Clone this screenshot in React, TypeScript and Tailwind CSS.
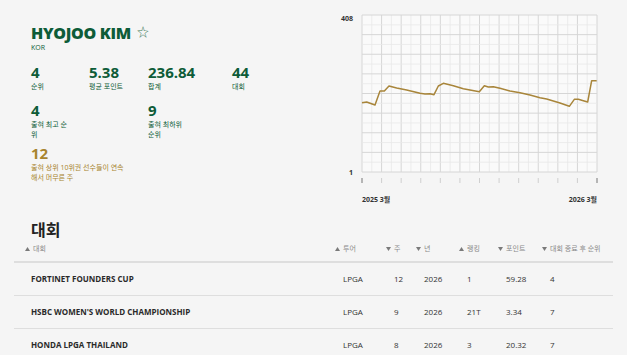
import React from "react";

const GREEN = "text-[#0d5c38]";

type Stat = { value: string; label: string; w: string; gold?: boolean };

const rowOne: Stat[] = [
  { value: "4", label: "순위", w: "w-[58px]" },
  { value: "5.38", label: "평균 포인트", w: "w-[59px]" },
  { value: "236.84", label: "합계", w: "w-[84px]" },
  { value: "44", label: "대회", w: "w-[60px]" },
];

function StatBlock({ s, labelW }: { s: Stat; labelW?: string }) {
  const color = s.gold ? "text-[#a8842e]" : GREEN;
  return (
    <div className={`${s.w} flex flex-col`}>
      <div className={`text-[15px] leading-[16px] font-bold ${color}`}>{s.value}</div>
      <div className={`mt-[2px] text-[7px] leading-[10px] ${color} ${labelW ?? ""}`}>{s.label}</div>
    </div>
  );
}

function Chart() {
  const x0 = 22;
  const x1 = 257;
  const y0 = 15;
  const y1 = 172;
  const dx = (x1 - x0) / 24;
  const dy = (y1 - y0) / 16;
  const vLines = Array.from({ length: 25 }, (_, i) => i);
  const hLines = Array.from({ length: 17 }, (_, i) => i);
  const pts: [number, number][] = [
    [126, 308], [140, 306], [165, 315], [180, 273], [193, 273], [207, 258], [230, 264],
    [260, 270], [300, 280], [315, 282], [330, 281], [342, 284], [355, 258], [370, 250],
    [400, 257], [430, 266], [450, 270], [478, 275], [493, 257], [505, 261], [520, 260],
    [540, 265], [570, 273], [600, 278], [630, 285], [660, 293], [680, 297], [700, 303],
    [720, 309], [748, 319], [763, 298], [775, 298], [790, 302], [803, 306], [815, 242],
    [830, 242],
  ];
  const path = pts.map(([x, y]) => `${(x / 3 - 20).toFixed(2)},${(y / 3).toFixed(2)}`).join(" ");
  return (
    <svg width="287" height="210" viewBox="0 0 287 210" className="block">
      <rect x={x0} y={y0} width={x1 - x0} height={y1 - y0} fill="#fafafa" />
      {vLines.map((i) => (
        <line
          key={`v${i}`}
          x1={x0 + i * dx}
          x2={x0 + i * dx}
          y1={y0}
          y2={y1}
          stroke={i % 2 === 0 ? "#d6d6d6" : "#e9e9e9"}
          strokeWidth={i % 2 === 0 ? 1 : 0.8}
        />
      ))}
      {hLines.map((i) => (
        <line
          key={`h${i}`}
          x1={x0}
          x2={x1}
          y1={y0 + i * dy}
          y2={y0 + i * dy}
          stroke={i % 2 === 0 ? "#d6d6d6" : "#e9e9e9"}
          strokeWidth={i % 2 === 0 ? 1 : 0.8}
        />
      ))}
      {Array.from({ length: 13 }, (_, i) => i).map((i) => (
        <line
          key={`t${i}`}
          x1={x0 + i * dx * 2}
          x2={x0 + i * dx * 2}
          y1={178}
          y2={183}
          stroke={i === 0 || i === 12 ? "#9a9a9a" : "#cfcfcf"}
          strokeWidth={i === 0 || i === 12 ? 1.4 : 1}
        />
      ))}
      <polyline points={path} fill="none" stroke="#a8853a" strokeWidth={1.5} strokeLinejoin="round" />
      <g fontFamily="'Open Sans','Noto Sans CJK KR',sans-serif" fontSize="7" fontWeight="700" fill="#333">
        <text x={13} y={21} textAnchor="end">408</text>
        <text x={13} y={175} textAnchor="end">1</text>
        <text x={x0} y={202}>2025 3월</text>
        <text x={x1} y={202} textAnchor="end">2026 3월</text>
      </g>
    </svg>
  );
}

function Arrow({ up }: { up: boolean }) {
  return (
    <svg width="5" height="4" viewBox="0 0 5 4" className="mr-[3px] shrink-0">
      <polygon points={up ? "0,4 5,4 2.5,0" : "0,0 5,0 2.5,4"} fill="#7a7a7a" />
    </svg>
  );
}

const cols = "grid grid-cols-[321px_51px_30px_43px_39px_44px_1fr]";

const header: { label: string; up: boolean; pad: string }[] = [
  { label: "대회", up: true, pad: "pl-[11px]" },
  { label: "투어", up: true, pad: "" },
  { label: "주", up: false, pad: "" },
  { label: "년", up: false, pad: "" },
  { label: "랭킹", up: true, pad: "" },
  { label: "포인트", up: false, pad: "" },
  { label: "대회 종료 후 순위", up: false, pad: "" },
];

const rows = [
  ["FORTINET FOUNDERS CUP", "LPGA", "12", "2026", "1", "59.28", "4"],
  ["HSBC WOMEN'S WORLD CHAMPIONSHIP", "LPGA", "9", "2026", "21T", "3.34", "7"],
  ["HONDA LPGA THAILAND", "LPGA", "8", "2026", "3", "20.32", "7"],
];

export default function App() {
  return (
    <div className="min-h-screen w-full bg-[#f5f5f5] font-['Open_Sans','Noto_Sans_CJK_KR',sans-serif] overflow-hidden">
      <div className="flex">
        <div className="w-[340px] pl-[31px] pt-[23px]">
          <div className="flex items-center">
            <h1 className={`text-[16px] leading-[20px] font-extrabold tracking-[-0.3px] ${GREEN}`}>HYOJOO KIM</h1>
            <span className="ml-[6px] text-[12px] leading-[20px] text-[#3d7a5a]">☆</span>
          </div>
          <div className={`text-[7px] leading-[9px] ${GREEN}`}>KOR</div>

          <div className="mt-[12px] flex">
            {rowOne.map((s) => (
              <StatBlock key={s.label} s={s} />
            ))}
          </div>
          <div className="mt-[10px] flex">
            <StatBlock s={{ value: "4", label: "출혀 최고 순위", w: "w-[117px]" }} labelW="w-[42px]" />
            <StatBlock s={{ value: "9", label: "출혀 최하위 순위", w: "w-[84px]" }} labelW="w-[40px]" />
          </div>
          <div className="mt-[5px] flex">
            <StatBlock
              s={{ value: "12", label: "출혀 상위 10위권 선수들이 연속해서 머무른 주", w: "w-[200px]", gold: true }}
              labelW="w-[95px]"
            />
          </div>
        </div>
        <div className="pt-0">
          <Chart />
        </div>
      </div>

      <h2 className="mt-[10px] pl-[31px] text-[16px] leading-[20px] font-bold text-[#222]">대회</h2>

      <div className="mx-[14px]">
        <div className={`${cols} h-[23px] pb-[3px] items-center text-[7px] text-[#8a8a8a] border-b-2 border-[#dedede]`}>
          {header.map((h) => (
            <div key={h.label + h.up} className={`flex items-center ${h.pad}`}>
              <Arrow up={h.up} />
              <span>{h.label}</span>
            </div>
          ))}
        </div>
        {rows.map((r) => (
          <div key={r[0]} className={`${cols} h-[33px] items-center text-[8px] text-[#333] border-b border-[#dedede]`}>
            <div className="pl-[17px] font-bold text-[#2a2a2a]">{r[0]}</div>
            {r.slice(1).map((c, i) => (
              <div key={i} className="pl-[8px]">{c}</div>
            ))}
          </div>
        ))}
      </div>
    </div>
  );
}
